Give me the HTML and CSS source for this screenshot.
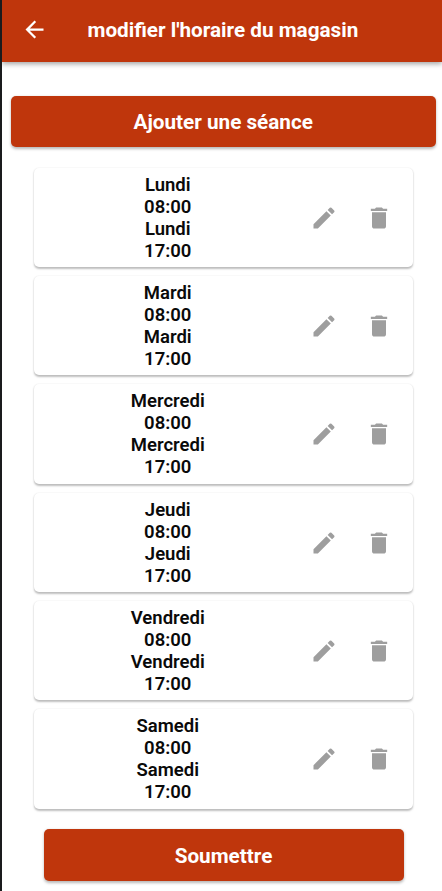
FILE: index.html
```
<!DOCTYPE html>
<html lang="fr">
<head>
<meta charset="utf-8">
<title>modifier l'horaire du magasin</title>
<link rel="stylesheet" href="styles.css">
</head>
<body>
<svg class="defs" width="0" height="0" aria-hidden="true">
  <symbol id="edit" viewBox="0 0 24 24"><path d="M3 17.25V21h3.75L17.81 9.94l-3.75-3.75L3 17.25zM20.71 7.04a1 1 0 0 0 0-1.41l-2.34-2.34a1 1 0 0 0-1.41 0l-1.83 1.83 3.75 3.75 1.83-1.83z"/></symbol>
  <symbol id="delete" viewBox="0 0 24 24"><path d="M6 19c0 1.1.9 2 2 2h8c1.1 0 2-.9 2-2V7H6v12zM19 4h-3.5l-1-1h-5l-1 1H5v2h14V4z"/></symbol>
</svg>
<div class="screen">
  <header class="bar">
    <svg class="back" viewBox="0 0 24 24"><path d="M20 11H7.83l5.59-5.59L12 4l-8 8 8 8 1.41-1.41L7.83 13H20v-2z"/></svg>
    <h1 class="title">modifier l'horaire du magasin</h1>
  </header>
  <button class="btn add">Ajouter une séance</button>
  <main class="list">
    <section class="card"><div class="hours">Lundi<br>08:00<br>Lundi<br>17:00</div><svg class="icon"><use href="#edit"/></svg><svg class="icon"><use href="#delete"/></svg></section>
    <section class="card"><div class="hours">Mardi<br>08:00<br>Mardi<br>17:00</div><svg class="icon"><use href="#edit"/></svg><svg class="icon"><use href="#delete"/></svg></section>
    <section class="card"><div class="hours">Mercredi<br>08:00<br>Mercredi<br>17:00</div><svg class="icon"><use href="#edit"/></svg><svg class="icon"><use href="#delete"/></svg></section>
    <section class="card"><div class="hours">Jeudi<br>08:00<br>Jeudi<br>17:00</div><svg class="icon"><use href="#edit"/></svg><svg class="icon"><use href="#delete"/></svg></section>
    <section class="card"><div class="hours">Vendredi<br>08:00<br>Vendredi<br>17:00</div><svg class="icon"><use href="#edit"/></svg><svg class="icon"><use href="#delete"/></svg></section>
    <section class="card"><div class="hours">Samedi<br>08:00<br>Samedi<br>17:00</div><svg class="icon"><use href="#edit"/></svg><svg class="icon"><use href="#delete"/></svg></section>
  </main>
  <button class="btn submit">Soumettre</button>
</div>
</body>
</html>
```
FILE: styles.css
```
* { box-sizing: border-box; }
body { margin: 0; background: #fff; font-family: Roboto, "Liberation Sans", sans-serif; }
.defs { display: block; width: 0; height: 0; }
.screen {
  height: 891px;
  overflow: hidden;
  border-left: 2px solid #1a1b1d;
  display: flex;
  flex-direction: column;
}
.bar {
  flex: none;
  height: 61.6px;
  padding-left: 19px;
  display: flex;
  align-items: center;
  background: #bf360c;
  box-shadow: 0 2px 5px rgba(0, 0, 0, .36);
}
.back { width: 27px; height: 27px; margin-top: -2px; fill: #fff; }
.title {
  margin: -2px 0 0 39.5px;
  font-size: 20.7px;
  line-height: 26px;
  font-weight: 700;
  color: #fff;
  white-space: nowrap;
}
.btn {
  flex: none;
  height: 51.5px;
  padding: 1.5px 0 0;
  border: 0;
  border-radius: 5px;
  background: #bf360c;
  color: #fff;
  font: 700 20.7px/26px Roboto, "Liberation Sans", sans-serif;
  box-shadow: 0 1.5px 3px rgba(0, 0, 0, .28);
}
.add { margin: 34px 6.5px 0 9px; }
.list {
  margin: 20.5px 29px 0 32px;
  display: flex;
  flex-direction: column;
  gap: 9.2px;
}
.card {
  height: 99.2px;
  padding: .8px 20px 0 0;
  display: flex;
  align-items: center;
  border-radius: 5px;
  background: #fff;
  box-shadow: 0 1.5px 2px rgba(0, 0, 0, .25), 0 0 2px rgba(0, 0, 0, .05);
}
.hours {
  width: 267.5px;
  margin-right: 8.5px;
  text-align: center;
  font-size: 18.5px;
  line-height: 22px;
  font-weight: 600;
  color: #0a0a0a;
}
.icon { width: 28px; height: 28px; fill: #9e9e9e; }
.icon + .icon { margin-left: 27px; }
.submit { margin: 20.5px 38.5px 0 41.5px; }
```
